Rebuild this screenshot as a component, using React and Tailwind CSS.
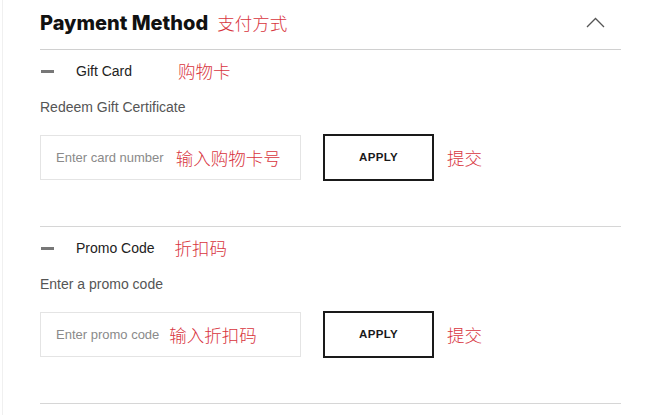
import React from 'react';

const cjk = { fontFamily: '"Noto Sans CJK SC", "Noto Sans", sans-serif' };
const body = { fontFamily: '"Liberation Sans", Arial, sans-serif' };

function Note({ children, className = '' }) {
  return (
    <span className={`text-[17.5px] leading-none text-[#d8343d] font-light ${className}`} style={cjk}>
      {children}
    </span>
  );
}

function Section({ title, titleNote, noteX, label, placeholder, inputNote, inputNoteX }) {
  return (
    <div className="border-b border-[#d6d6d6] pb-[45px]">
      <div className="flex h-[42px] items-center">
        <span className="ml-px h-[3px] w-[13px] bg-[#777]" />
        <span className="ml-[22px] text-[14px] text-[#222]" style={body}>{title}</span>
        <Note className={noteX}>{titleNote}</Note>
      </div>
      <div className="flex h-[30px] items-center text-[14px] text-[#555]" style={body}>{label}</div>
      <div className="mt-3 flex h-[47px] items-center">
        <div className="flex h-[45px] w-[261px] items-center border border-[#e4e4e4] pl-[15px]">
          <span className="text-[13px] text-[#8a8a8a]" style={body}>{placeholder}</span>
          <Note className={inputNoteX}>{inputNote}</Note>
        </div>
        <button
          className="ml-[22px] flex h-[47px] w-[111px] items-center justify-center border-2 border-[#1a1a1a] bg-white text-[11.5px] font-bold tracking-[0.3px] text-[#1a1a1a]"
          style={body}
        >
          APPLY
        </button>
        <Note className="ml-[13px]">提交</Note>
      </div>
    </div>
  );
}

export default function App() {
  return (
    <div className="min-h-screen bg-white pl-[2px]">
      <div className="min-h-[415px] border-l border-[#f0f0f0] pl-[37px] pr-[37px]">
        <div className="w-[581px]">
          <div className="flex h-[50px] items-center border-b border-[#d0d0d0] pb-[3px]">
            <span
              className="text-[20px] font-extrabold text-[#111]"
              style={{ fontFamily: 'Inter, "Liberation Sans", sans-serif' }}
            >
              Payment Method
            </span>
            <Note className="ml-[9px]">支付方式</Note>
            <svg className="ml-auto mr-[16px] mt-[-2px]" width="19" height="11" viewBox="0 0 19 11" fill="none">
              <polyline points="1,10 9.5,1.5 18,10" stroke="#555" strokeWidth="1.3" />
            </svg>
          </div>
          <Section
            title="Gift Card"
            titleNote="购物卡"
            noteX="ml-[46px]"
            label="Redeem Gift Certificate"
            placeholder="Enter card number"
            inputNote="输入购物卡号"
            inputNoteX="ml-[12px]"
          />
          <Section
            title="Promo Code"
            titleNote="折扣码"
            noteX="ml-[20px]"
            label="Enter a promo code"
            placeholder="Enter promo code"
            inputNote="输入折扣码"
            inputNoteX="ml-[10px]"
          />
        </div>
      </div>
    </div>
  );
}
